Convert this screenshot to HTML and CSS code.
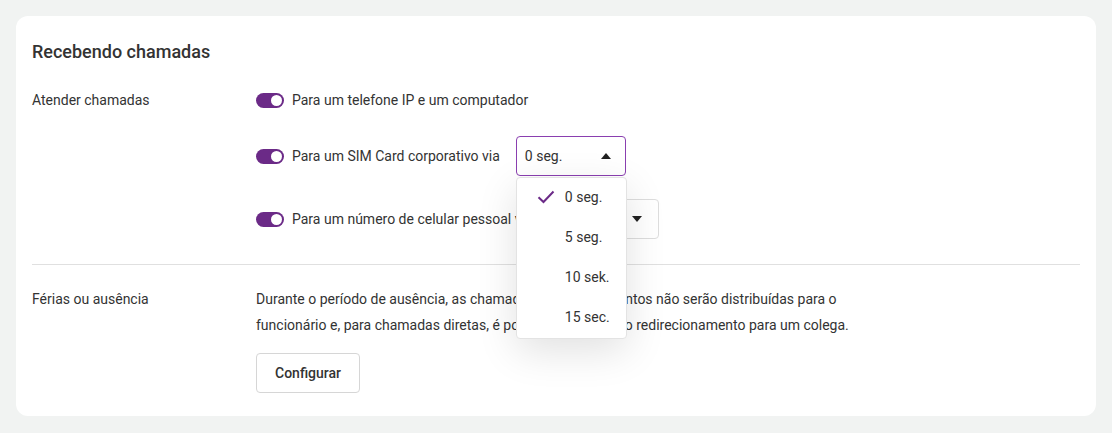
FILE: index.html
```html
<!DOCTYPE html>
<html lang="pt">
<head>
  <meta charset="UTF-8" />
  <title>Recebendo chamadas</title>
  <link rel="stylesheet" href="styles.css">
</head>
<body>
  <div class="card">
    <h2 class="titulo">Recebendo chamadas</h2>

    <div class="secao">
      <div class="rotulo">Atender chamadas</div>
      <div class="opcoes">
        <div class="opcao primeira">
          <span class="toggle on"></span>
          <span>Para um telefone IP e um computador</span>
        </div>

        <div class="opcao segunda">
          <span class="toggle on"></span>
          <span>Para um SIM Card corporativo via</span>
          <div class="select-wrap">
            <div class="select aberto">
              <span>0 seg.</span>
              <span class="seta cima"></span>
            </div>
            <ul class="menu">
              <li class="ativo">
                <svg class="check" width="18" height="14" viewBox="0 0 18 14"><path d="M1.5 7.2 L6.5 12 L16.5 1.5" fill="none" stroke="#6b2a87" stroke-width="2"/></svg>
                0 seg.
              </li>
              <li>5 seg.</li>
              <li>10 sek.</li>
              <li>15 sec.</li>
            </ul>
          </div>
        </div>

        <div class="opcao terceira">
          <span class="toggle on"></span>
          <span>Para um número de celular pessoal via</span>
          <div class="select curto">
            <span>0 seg.</span>
            <span class="seta"></span>
          </div>
        </div>
      </div>
    </div>

    <hr class="divisor">

    <div class="secao ferias">
      <div class="rotulo">Férias ou ausência</div>
      <div class="opcoes">
        <p class="descricao">Durante o período de ausência, as chamadas de departamentos não serão distribuídas para o funcionário e, para chamadas diretas, é possível configurar o redirecionamento para um colega.</p>
        <button class="botao">Configurar</button>
      </div>
    </div>
  </div>
</body>
</html>
```

FILE: styles.css
```css
* {
  box-sizing: border-box;
}

body {
  margin: 0;
  padding: 16px;
  background: #f1f3f2;
  font-family: Roboto, "Noto Sans", Arial, sans-serif;
  color: #333;
  font-size: 14px;
}

.card {
  background: #fff;
  border-radius: 12px;
  padding: 24px 16px 23px;
  height: 400px;
}

.titulo {
  margin: 0 0 26px;
  font-size: 18px;
  font-weight: 500;
  line-height: 24px;
  color: #333;
}

.secao {
  display: flex;
}

.rotulo {
  width: 224px;
  line-height: 20px;
}

.ferias .rotulo {
  line-height: 26px;
}

.opcoes {
  flex: 1;
}

.opcao {
  display: flex;
  align-items: center;
  gap: 8px;
  line-height: 20px;
}

.opcao.primeira {
  height: 20px;
  margin-bottom: 26px;
}

.opcao.segunda {
  height: 40px;
  margin-bottom: 23px;
}

.opcao.terceira {
  height: 40px;
}

.toggle {
  position: relative;
  width: 28px;
  height: 15px;
  border-radius: 8px;
  background: #6b2a87;
  flex-shrink: 0;
}

.toggle::after {
  content: "";
  position: absolute;
  top: 2px;
  right: 2px;
  width: 11px;
  height: 11px;
  border-radius: 50%;
  background: #fff;
}

.select-wrap {
  position: relative;
  margin-left: 8px;
}

.select {
  display: flex;
  align-items: center;
  justify-content: space-between;
  width: 110px;
  height: 40px;
  padding: 0 14px 0 8px;
  border: 1px solid #ddd;
  border-radius: 4px;
  background: #fff;
}

.select.aberto {
  border-color: #8a3fb0;
}

.select.curto {
  margin-left: 8px;
  width: 110px;
  padding-right: 16px;
}

.seta {
  width: 0;
  height: 0;
  border-left: 5px solid transparent;
  border-right: 5px solid transparent;
  border-top: 6px solid #222;
}

.seta.cima {
  border-top: none;
  border-bottom: 6px solid #222;
}

.menu {
  position: absolute;
  top: 41px;
  left: 0;
  width: 111px;
  margin: 0;
  padding: 0;
  list-style: none;
  background: #fff;
  border: 1px solid #e3e3e3;
  border-radius: 4px;
  box-shadow: 0 12px 40px rgba(0, 0, 0, 0.12);
  z-index: 2;
}

.menu li {
  height: 40px;
  line-height: 38px;
  padding-left: 48px;
  position: relative;
}

.menu .check {
  position: absolute;
  left: 20px;
  top: 12px;
}

.divisor {
  border: none;
  border-top: 1px solid #e0e0e0;
  margin: 25px 0 21px;
}

.descricao {
  margin: 0;
  max-width: 600px;
  line-height: 26px;
}

.botao {
  margin-top: 15px;
  height: 40px;
  padding: 0 18px;
  border: 1px solid #d6d6d6;
  border-radius: 4px;
  background: #fff;
  font-family: inherit;
  font-size: 14px;
  font-weight: 500;
  color: #333;
}
```
